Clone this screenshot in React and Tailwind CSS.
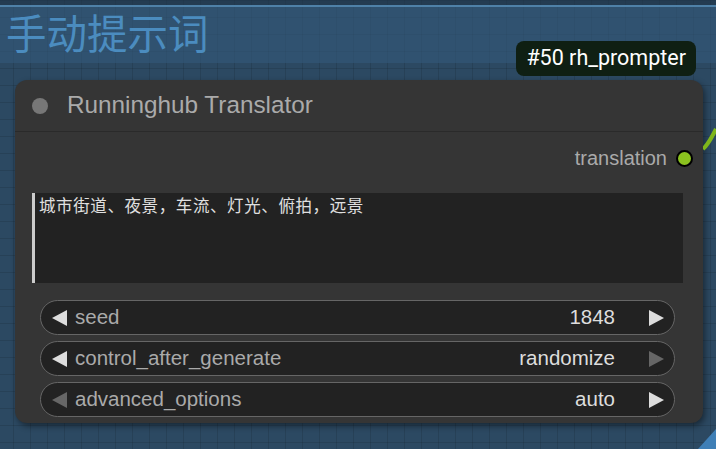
const Arrow = ({ dir = "left", dim = false }) => (
  <svg width="17" height="18" viewBox="0 0 17 18" className="shrink-0">
    {dir === "left" ? (
      <polygon points="16,1 16,17 1,9" fill={dim ? "#666666" : "#dddddd"} />
    ) : (
      <polygon points="1,1 1,17 16,9" fill={dim ? "#666666" : "#dddddd"} />
    )}
  </svg>
);

const Widget = ({ label, value, leftDim, rightDim }) => (
  <div className="h-[35px] flex items-center rounded-full bg-[#222222] border border-[#666666] pl-[10px] pr-[9px]">
    <Arrow dir="left" dim={leftDim} />
    <span className="ml-[7px] text-[20.5px] text-[#aaaaaa] leading-none">{label}</span>
    <span className="ml-auto text-[20.5px] text-[#dddddd] leading-none">{value}</span>
    <span className="ml-[33px]">
      <Arrow dir="right" dim={rightDim} />
    </span>
  </div>
);

const App = () => {
  return (
    <main
      className="w-[716px] h-[449px] overflow-hidden relative bg-[#2c4962] bg-[linear-gradient(to_right,rgba(0,0,0,0.11)_1px,transparent_1px),linear-gradient(to_bottom,rgba(0,0,0,0.11)_1px,transparent_1px)] bg-[size:17px_17px] bg-[position:13px_0px]"
      style={{ fontFamily: '"Liberation Sans", Arial, sans-serif' }}
    >
      <div className="h-[5px] bg-[#203447]/60"></div>
      <div className="h-[2px] bg-[#4f81a8]"></div>
      <div className="h-[56px] bg-[#34597a]/60 pl-[6px] flex items-start">
        <h1
          className="text-[40.5px] leading-[50px] text-[#4b8cbf]"
          style={{ fontFamily: '"Noto Sans CJK SC", sans-serif' }}
        >
          手动提示词
        </h1>
      </div>

      <div className="pl-[15px] pt-[17px]">
        <div className="relative w-[688px] h-[343px] rounded-[12px] bg-[#353535] shadow-[2px_3px_6px_rgba(0,0,0,0.45)] flex flex-col">
          <div
            className="absolute -top-[39px] right-[7px] h-[35px] px-[10px] rounded-[8px] bg-[#0f1f13] text-white text-[21.5px] flex items-center"
            style={{ fontFamily: 'Roboto, "Liberation Sans", sans-serif' }}
          >
            #50 rh_prompter
          </div>

          <div className="h-[52px] flex items-center border-b border-[#2a2a2a] pl-[17px]">
            <span className="w-[16px] h-[16px] rounded-full bg-[#777777]"></span>
            <span className="ml-[19px] text-[24.3px] text-[#aaaaaa]">Runninghub Translator</span>
          </div>

          <div className="h-[50px] flex items-center justify-end pr-[10px] pt-[2px]">
            <span className="text-[20px] text-[#aaaaaa]">translation</span>
            <span className="ml-[9px] w-[17px] h-[17px] rounded-full bg-[#8bc21f] border-[2px] border-black"></span>
          </div>

          <div className="ml-[17px] mr-[20px] mt-[11px] h-[90px] bg-[#222222] border-l-[3px] border-[#cccccc] pl-[4px] pt-[1px]">
            <p
              className="text-[16.5px] leading-[22px] tracking-[0.6px] text-[#e0e0e0]"
              style={{ fontFamily: '"Noto Sans CJK SC", sans-serif' }}
            >
              城市街道、夜景，车流、灯光、俯拍，远景
            </p>
          </div>

          <div className="mx-[25px] mr-[28px] mt-[17px] flex flex-col gap-[6px]">
            <Widget label="seed" value="1848" />
            <Widget label="control_after_generate" value="randomize" rightDim />
            <Widget label="advanced_options" value="auto" leftDim />
          </div>
        </div>
      </div>

      <svg className="absolute left-[703px] top-[125px]" width="13" height="30" viewBox="0 0 13 30">
        <path d="M0 24 C5 20 9 12 13 4" stroke="#7fb61b" strokeWidth="4" fill="none" />
      </svg>
      <svg className="absolute right-0 bottom-0" width="18" height="20" viewBox="0 0 18 20">
        <polygon points="18,0 18,20 0,20" fill="#3f7fb6" />
      </svg>
    </main>
  );
};

export default App;
